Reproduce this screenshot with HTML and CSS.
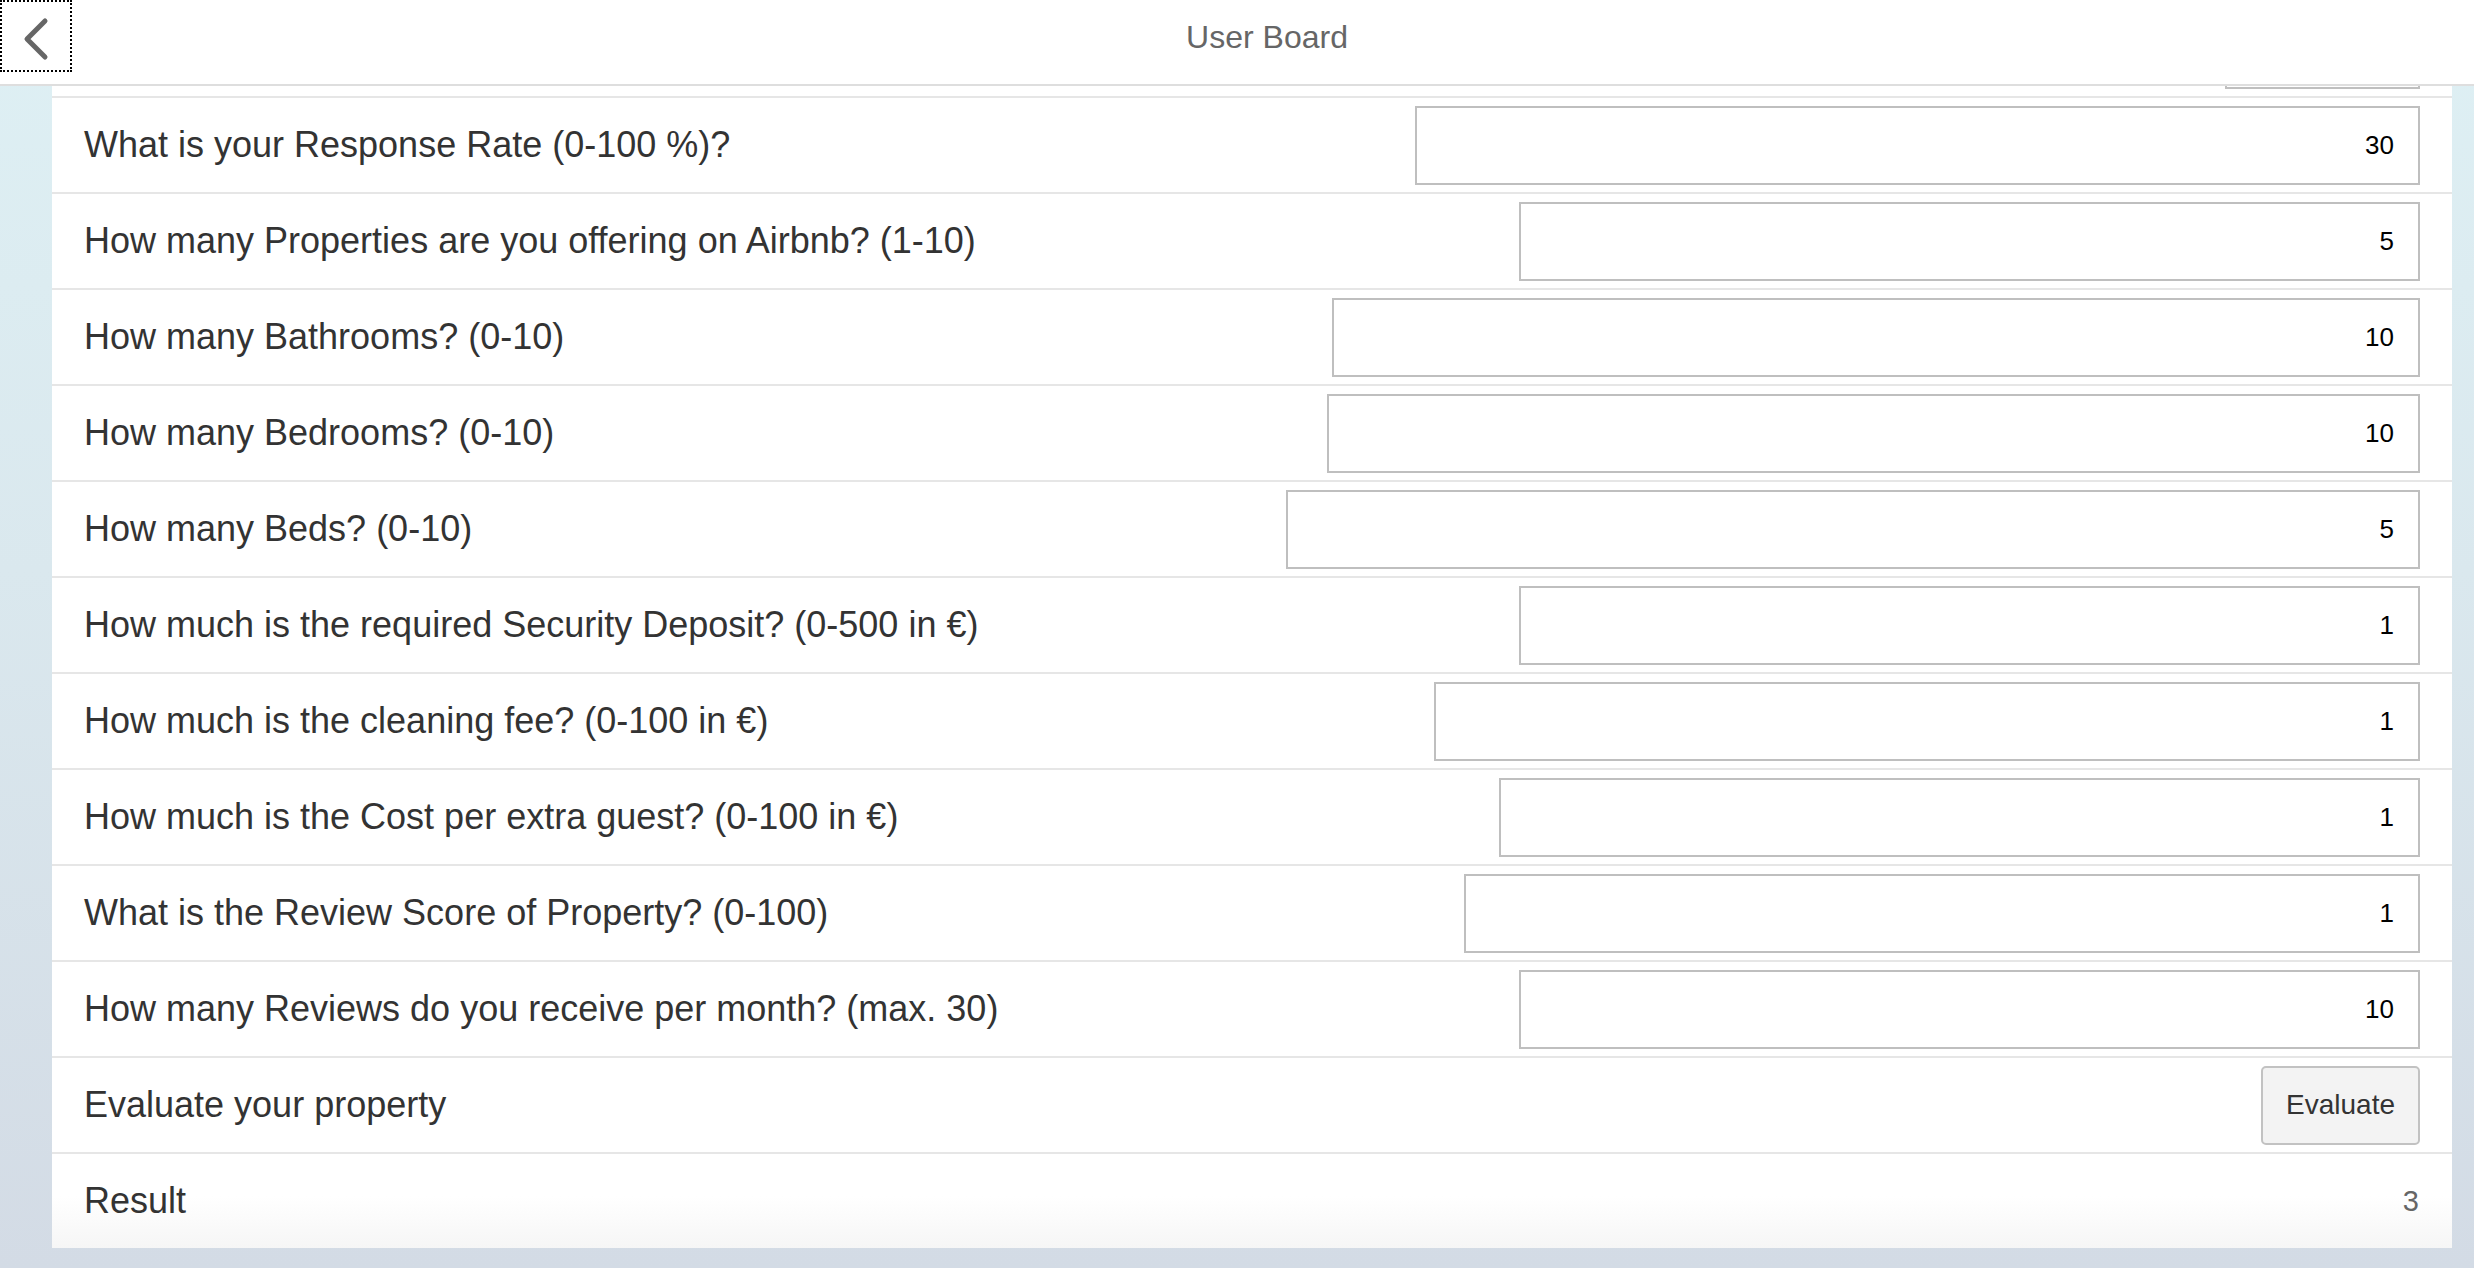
FILE: index.html
```html
<!DOCTYPE html>
<html lang="en">
<head>
<meta charset="utf-8">
<title>User Board</title>
<link rel="stylesheet" href="styles.css">
</head>
<body>
<header class="bar">
  <button class="back" aria-label="Back">
    <svg width="68" height="68" viewBox="0 0 68 68"><polyline points="43,19 25,37 43,55" fill="none" stroke="#666" stroke-width="5" stroke-linecap="round" stroke-linejoin="round"/></svg>
  </button>
  <h1 class="title">User Board</h1>
</header>
<main class="scroll">
  <section class="panel">
    <ul class="list">
      <li class="row"><span class="label"></span><input class="field w-prev" type="text" value=""></li>
      <li class="row"><span class="label">What is your Response Rate (0-100 %)?</span><input class="field w1" type="text" value="30"></li>
      <li class="row"><span class="label">How many Properties are you offering on Airbnb? (1-10)</span><input class="field w2" type="text" value="5"></li>
      <li class="row"><span class="label">How many Bathrooms? (0-10)</span><input class="field w3" type="text" value="10"></li>
      <li class="row"><span class="label">How many Bedrooms? (0-10)</span><input class="field w4" type="text" value="10"></li>
      <li class="row"><span class="label">How many Beds? (0-10)</span><input class="field w5" type="text" value="5"></li>
      <li class="row"><span class="label">How much is the required Security Deposit? (0-500 in €)</span><input class="field w6" type="text" value="1"></li>
      <li class="row"><span class="label">How much is the cleaning fee? (0-100 in €)</span><input class="field w7" type="text" value="1"></li>
      <li class="row"><span class="label">How much is the Cost per extra guest? (0-100 in €)</span><input class="field w8" type="text" value="1"></li>
      <li class="row"><span class="label">What is the Review Score of Property? (0-100)</span><input class="field w9" type="text" value="1"></li>
      <li class="row"><span class="label">How many Reviews do you receive per month? (max. 30)</span><input class="field w10" type="text" value="10"></li>
      <li class="row"><span class="label">Evaluate your property</span><button class="btn">Evaluate</button></li>
      <li class="row result"><span class="label">Result</span><span class="value">3</span></li>
    </ul>
  </section>
</main>
</body>
</html>
```
FILE: styles.css
```css
* { box-sizing: border-box; }

html, body {
  margin: 0;
  padding: 0;
}

body {
  width: 2474px;
  height: 1268px;
  overflow: hidden;
  font-family: "Liberation Sans", Arial, sans-serif;
  background: linear-gradient(180deg, #def0f4 0%, #dae8ee 45%, #d3dbe5 100%);
}

.bar {
  height: 86px;
  background: #fff;
  border-bottom: 2px solid #dedede;
  display: flex;
  align-items: flex-start;
}

.back {
  width: 72px;
  height: 72px;
  margin: 0;
  padding: 0;
  border: 2px dotted #000;
  background: #fff;
  display: flex;
  align-items: center;
  justify-content: center;
  flex: none;
}

.back svg { display: block; }

.title {
  flex: 1;
  margin: 0;
  height: 72px;
  line-height: 74px;
  padding-right: 12px;
  text-align: center;
  font-size: 32px;
  font-weight: normal;
  color: #666;
}

.scroll {
  height: 1182px;
  overflow: hidden;
  padding: 0 22px 0 52px;
}

.panel {
  background: #fff;
  overflow: hidden;
}

.list {
  list-style: none;
  margin: -86px 0 0 0;
  padding: 0;
}

.row {
  height: 96px;
  border-top: 2px solid #e6e6e6;
  padding: 0 32px;
  display: flex;
  align-items: center;
  justify-content: space-between;
}

.label {
  font-size: 36px;
  color: #333;
  white-space: nowrap;
}

.field {
  height: 79px;
  border: 2px solid #bfbfbf;
  border-radius: 0;
  padding: 0 24px 0 12px;
  font-family: "Liberation Sans", Arial, sans-serif;
  font-size: 26px;
  color: #000;
  text-align: right;
  background: #fff;
  outline: none;
}

.w-prev { width: 195px; }
.w1 { width: 1005px; }
.w2 { width: 901px; }
.w3 { width: 1088px; }
.w4 { width: 1093px; }
.w5 { width: 1134px; }
.w6 { width: 901px; }
.w7 { width: 986px; }
.w8 { width: 921px; }
.w9 { width: 956px; }
.w10 { width: 901px; }

.btn {
  width: 159px;
  height: 79px;
  border: 2px solid #c2c2c2;
  border-radius: 5px;
  background: #f3f3f3;
  font-family: "Liberation Sans", Arial, sans-serif;
  font-size: 28px;
  color: #333;
  padding: 0;
}

.result {
  height: 96px;
  background: linear-gradient(180deg, #fff 45%, #f6f6f6 100%);
}

.value {
  font-size: 29px;
  color: #666;
  padding-right: 1px;
}
```
